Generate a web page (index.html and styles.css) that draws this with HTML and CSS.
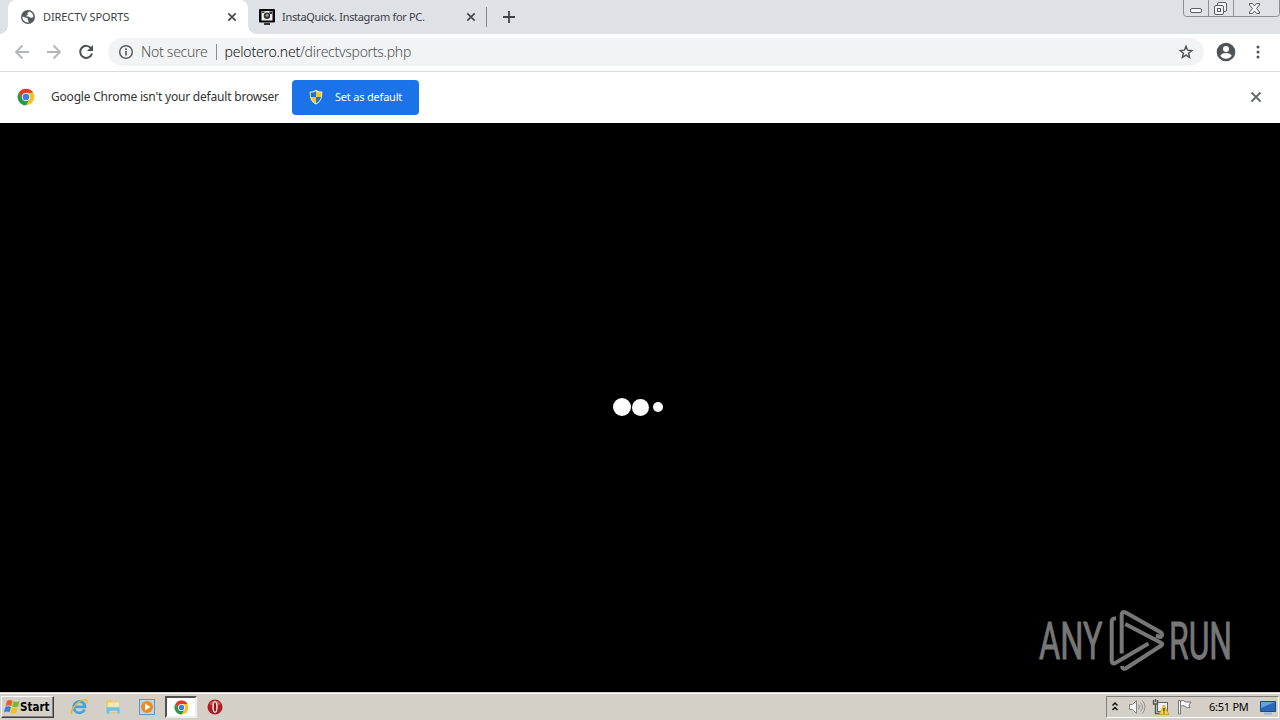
FILE: index.html
```html
<!DOCTYPE html>
<html lang="en">
<head>
<meta charset="utf-8">
<title>DIRECTV SPORTS</title>
<link rel="stylesheet" href="styles.css">
</head>
<body>
<div class="screen">
  <header class="tabstrip">
    <div class="tab active">
      <svg class="favicon" width="16" height="16" viewBox="0 0 16 16"><circle cx="8" cy="8" r="7" fill="#565a5e"/><path d="M2.400 7.600 5 8.600l2.500.5.4 2 1 2.400C5.500 14 2.200 11.500 2.400 7.600ZM9.400 2.500 7.200 4.200l.8 1.200L5.800 7.200l2.600.3 2.200 1.300 2.700-.6C13.600 5.500 12 3.400 9.400 2.500Z" fill="#fff"/></svg>
      <span class="label t1">DIRECTV SPORTS</span>
      <svg class="close" width="10" height="10" viewBox="0 0 10 10"><path d="m1.300 1.300 7.400 7.400m0-7.400L1.300 8.700" stroke="#45494d" stroke-width="1.700"/></svg>
    </div>
    <div class="tab second">
      <svg class="favicon" width="16" height="16" viewBox="0 0 16 16"><rect width="16" height="13.500" rx="1" fill="#080808"/><rect x="2.500" y="2" width="11" height="9.500" fill="#eee"/><path d="M3 2.500h3L5 4H3zM10 2.500h3V5h-2z" fill="#333"/><circle cx="8" cy="6.800" r="3.200" fill="#333"/><circle cx="8" cy="6.300" r="1.500" fill="#999"/><path d="M5 14.200h6v1.600H5z" fill="#080808"/></svg>
      <span class="label t2">InstaQuick. Instagram for PC.</span>
      <svg class="close" width="10" height="10" viewBox="0 0 10 10"><path d="m1.300 1.300 7.400 7.400m0-7.400L1.300 8.700" stroke="#45494d" stroke-width="1.700"/></svg>
    </div>
    <i class="tab-sep"></i>
    <svg class="newtab" width="12" height="12" viewBox="0 0 12 12"><path d="M6 0v12M0 6h12" stroke="#3f4347" stroke-width="1.800"/></svg>
    <div class="winbtns">
      <svg width="97" height="17" viewBox="0 0 97 17"><path d="M.5-1v14.500q0 3 3 3h90q3 0 3-3V-1M25.500 0v16M50.500 0v16" fill="none" stroke="#8a8e96"/><g fill="#f5f6f8" stroke="#595e68"><rect x="7.500" y="8.500" width="11" height="4" rx="1.500"/><rect x="34.500" y="2.500" width="9" height="9" rx="1.500"/><rect x="31.500" y="5.500" width="9" height="9" rx="1.500"/><rect x="34.500" y="8.500" width="3" height="3"/><path d="M66.500 3.500h3l2 2.500 2-2.500h3v1.500l-3 3.500 3 3.500v1.500h-3l-2-2.500-2 2.500h-3V12l3-3.500-3-3.500z"/></g></svg>
    </div>
  </header>
  <div class="toolbar">
    <svg class="nav" width="16" height="16" viewBox="0 0 16 16"><path d="M15 8H2m6.500-6.500L2 8l6.500 6.500" fill="none" stroke="#b3b5b8" stroke-width="1.800"/></svg>
    <svg class="nav" width="16" height="16" viewBox="0 0 16 16"><path d="M1 8h13M7.500 1.500 14 8l-6.500 6.500" fill="none" stroke="#b3b5b8" stroke-width="1.800"/></svg>
    <svg class="nav" width="16" height="16" viewBox="0 0 16 16"><path d="M13.200 4.500A6 6 0 1 0 14 9.500" fill="none" stroke="#4c5054" stroke-width="2"/><path d="M15 1v6H9z" fill="#4c5054"/></svg>
    <div class="omnibox">
      <svg class="info" width="16" height="16" viewBox="0 0 16 16"><circle cx="8" cy="8" r="6.300" fill="none" stroke="#5a5e62" stroke-width="1.500"/><path d="M8 7v4.500M8 4.200v1.700" stroke="#5a5e62" stroke-width="1.700"/></svg>
      <span class="label secure">Not secure</span>
      <i class="sep"></i>
      <span class="label host">pelotero.net</span><span class="label path">/directvsports.php</span>
      <svg class="star" width="16" height="16" viewBox="0 0 16 16"><path d="m8 2.200 1.600 4 4.200.3-3.200 2.700 1 4.200L8 11.100l-3.600 2.300 1-4.200-3.200-2.700 4.200-.3z" fill="none" stroke="#505458" stroke-width="1.400"/></svg>
    </div>
    <svg class="profile" width="20" height="20" viewBox="0 0 20 20"><circle cx="10" cy="10" r="9.300" fill="#505458"/><circle cx="10" cy="7" r="3" fill="#fff"/><path d="M4.300 13.800c1.100-2 3.200-2.700 5.700-2.700s4.600.7 5.700 2.700C14.400 15.700 12.400 16.700 10 16.700s-4.400-1-5.700-2.900Z" fill="#fff"/></svg>
    <svg class="dots" width="4" height="16" viewBox="0 0 4 16"><g fill="#505458"><circle cx="2" cy="3" r="1.500"/><circle cx="2" cy="8" r="1.500"/><circle cx="2" cy="13" r="1.500"/></g></svg>
  </div>
  <div class="infobar">
    <svg width="18" height="18" viewBox="0 0 18 18"><circle cx="9" cy="9" r="8.300" fill="#fbc116"/><path d="M1.800 4.850A8.300 8.300 0 0 1 16.200 4.850H9L5.500 11z" fill="#e33b2e"/><path d="M1.800 4.850 5.500 11 9 13l3.500-2L9 17.300A8.300 8.300 0 0 1 1.800 4.850Z" fill="#229a4b"/><circle cx="9" cy="9" r="4.100" fill="#fff"/><circle cx="9" cy="9" r="3.300" fill="#3f7fe8"/></svg>
    <span class="label notice">Google Chrome isn't your default browser</span>
    <div class="setdefault">
      <svg width="16" height="16" viewBox="0 0 16 16"><path d="M8 .7c2 1.400 4 1.900 6.300 1.700C14.500 8.600 13 12.900 8 15.500 3 12.900 1.500 8.600 1.700 2.400 4 2.600 6 2.100 8 .7Z" fill="#f0eccb"/><path d="M8 2.200V8H2.900c-.3-1.500-.3-2.800-.2-4.400C4.700 3.600 6.500 3.100 8 2.200ZM8 8h5c-.7 3-2.300 5-5 6.300Z" fill="#2673c6"/><path d="M8 2.200V8h5c.3-1.500.3-2.800.2-4.400C11.300 3.600 9.500 3.100 8 2.200ZM8 8H2.900C3.700 11 5.300 13 8 14.300Z" fill="#f7c52d"/></svg>
      <span class="label setlabel">Set as default</span>
    </div>
    <svg class="dismiss" width="12" height="12" viewBox="0 0 12 12"><path d="m1.500 1.500 9 9m0-9-9 9" stroke="#666a6e" stroke-width="1.900"/></svg>
  </div>
  <main class="page">
    <div class="loader"><i class="big"></i><i class="mid"></i><i class="small"></i></div>
    <svg class="watermark" width="200" height="70" viewBox="0 0 200 70">
      <g fill="#777" stroke="#777" stroke-width=".9" font-family="Roboto, sans-serif" font-size="52"><text transform="translate(2 52.300) scale(.63 1)" textLength="101" lengthAdjust="spacingAndGlyphs">ANY</text><text transform="translate(132 52.300) scale(.63 1)" textLength="100" lengthAdjust="spacingAndGlyphs">RUN</text></g>
      <g fill="none" stroke="#777" stroke-width="4" stroke-linejoin="round" stroke-linecap="butt"><path d="M84.700 46.500V8q0-4.500 4-2.500L124 25.500q2.500 2.500-.5 4.500l-4.500-1.500"/><path d="M88.200 17 124 35.800q2.500 1.400 0 2.900L89 61.300q-3.500 1.500-4-2.300"/><path d="M79 11.500q-4.300-.5-4.300 3.500v38.500q0 4.500 4 2.200L111.500 36.500"/></g>
    </svg>
  </main>
  <footer class="taskbar">
    <div class="start">
      <svg width="17" height="16" viewBox="0 0 17 16"><path d="M3 2q3-2 5.500-.2L7.200 7Q4.500 5.400 1.600 7z" fill="#e95b27"/><path d="M9.500 2.300q3 1.500 6-.1L14 7.600q-3 1.500-5.800 0z" fill="#78b82f"/><path d="M1.300 8q3-1.600 5.600 0l-1.400 5.200Q3 11.700 0 13.200z" fill="#3480cf"/><path d="M7.900 8.500q3 1.500 5.800 0L12.300 14q-3 1.500-5.800 0z" fill="#f7bd25"/></svg>
      <b class="label startlabel">Start</b>
    </div>
    <div class="launch">
      <svg width="18" height="18" viewBox="0 0 18 18"><path d="M14.500 11.500A5.700 5.700 0 1 1 15 8.800H5" fill="none" stroke="#43a4de" stroke-width="2.700"/><path d="M2 16C-1 13 10-.5 16.500 2q1.300 1 .2 3" fill="none" stroke="#e7b82f" stroke-width="1.300"/></svg>
      <svg width="18" height="18" viewBox="0 0 18 18"><path d="M2 2h5l1 1.500h6v12H2z" fill="#e9ca68"/><path d="M4 4.500h11v9H4z" fill="#f8e9a8"/><path d="M2 9h14v7h-3v-3H6v3H2z" fill="#79bddd" stroke="#b9deea" stroke-width=".7"/></svg>
      <svg width="18" height="18" viewBox="0 0 18 18"><rect x="1.500" y="1.500" width="15" height="15" fill="#b9d8ee" stroke="#5299cf"/><circle cx="9" cy="9" r="6" fill="#f18a1c"/><path d="m7 5.500 5.500 3.500L7 12.500z" fill="#fff"/></svg>
      <div class="running"><svg width="15" height="15" viewBox="0 0 18 18"><circle cx="9" cy="9" r="8.300" fill="#fbc116"/><path d="M1.800 4.850A8.300 8.300 0 0 1 16.200 4.850H9L5.500 11z" fill="#dc3b2e"/><path d="M1.800 4.850 5.500 11 9 13l3.500-2L9 17.300A8.300 8.300 0 0 1 1.800 4.850Z" fill="#229a4b"/><circle cx="9" cy="9" r="4.300" fill="#fff"/><circle cx="9" cy="9" r="3.300" fill="#3f7fe8"/></svg></div>
      <svg width="18" height="18" viewBox="0 0 18 18"><circle cx="9" cy="9" r="7.500" fill="#b31b20"/><path d="M3 6q6-7 12 0L9 8z" fill="#d6585b"/><ellipse cx="9" cy="9" rx="2.700" ry="6" fill="#eee"/><ellipse cx="9" cy="9" rx="1.200" ry="4.800" fill="#991116"/></svg>
    </div>
    <div class="tray">
      <svg width="8" height="12" viewBox="0 0 8 12"><path d="m1.500 4.500 2.500-2.500 2.500 2.500m-5 4.500L4 6.500 6.500 9" fill="none" stroke="#111" stroke-width="1.500"/></svg>
      <svg class="sound" width="18" height="16" viewBox="0 0 18 16"><path d="M1.500 5.500h3l4-4v13l-4-4h-3z" fill="#f8f8f8" stroke="#858585"/><path d="M10.500 5.500q2 2.500 0 5m2-7q4 4.500 0 9m2-11q5 6.500 0 13" fill="none" stroke="#929292"/></svg>
      <svg class="net" width="18" height="16" viewBox="0 0 18 16"><rect x="5.500" y="3.500" width="10" height="9" fill="#eee" stroke="#666"/><path d="M1.500 1v4h4V1M3.500 0v3M3.500 5v9.500h5" fill="none" stroke="#555" stroke-width="1.400"/><path d="m12 6 5 9.500H7z" fill="#f8d529" stroke="#bb9415" stroke-width=".7"/><path d="M12 9v3.500m0 1v1" stroke="#222" stroke-width="1.200"/></svg>
      <svg class="flag" width="17" height="16" viewBox="0 0 17 16"><path d="M2.500 15V1.500h2V15z" fill="#fff" stroke="#777"/><path d="M4.500 2q3-1.500 5 1h5.500l-2 3 1 2.500q-3 1-5-1t-4.500 0z" fill="#f8f8f8" stroke="#777"/></svg>
      <span class="label clock">6:51 PM</span>
      <svg class="desktop" width="16" height="15" viewBox="0 0 16 15"><path d="M.5 1.500h15v10H.500z" fill="#2868b7" stroke="#174887"/><path d="M1 2h14L1 8z" fill="#65a3df"/><path d="M4 13.500h8" stroke="#8bb6df" stroke-width="2"/></svg>
    </div>
  </footer>
</div>
</body>
</html>
```
FILE: styles.css
```css
* { box-sizing: border-box; }
body { margin: 0; overflow: hidden; background: #000; }
svg { display: block; flex: none; }
.screen { width: 1280px; height: 720px; display: flex; flex-direction: column; font: 11px/16px "Noto Sans", sans-serif; color: #3c4043; }
.label { white-space: nowrap; flex: none; }
.tabstrip { height: 34px; background: #dee1e6; display: flex; align-items: center; padding-left: 8px; flex: none; }
.tab { height: 34px; display: flex; align-items: center; }
.tab.active { width: 240px; background: #fff; padding: 0 11px 0 12px; border-radius: 8px 8px 0 0; position: relative; }
.tab.active::before, .tab.active::after { content: ""; position: absolute; bottom: 0; width: 8px; height: 8px; background: radial-gradient(circle at 0 0, #dee1e6 7.5px, #fff 8px); }
.tab.active::before { left: -8px; }
.tab.active::after { right: -8px; background: radial-gradient(circle at 100% 0, #dee1e6 7.5px, #fff 8px); }
.tab .label { margin-left: 7px; }
.tab .close { margin-left: auto; }
.t1 { letter-spacing: -.1px; }
.t2 { letter-spacing: -.32px; color: #3c4043; }
.tab.second { width: 238px; padding: 0 10px 0 11px; }
.tab-sep { width: 1px; height: 20px; background: #858a90; }
.newtab { margin-left: 16px; }
.winbtns { margin-left: auto; align-self: flex-start; }
.toolbar { height: 38px; background: #fff; border-bottom: 1px solid #dadcde; display: flex; align-items: center; padding: 0 0 1px 14px; flex: none; }
.toolbar .nav { margin-right: 16px; }
.toolbar .nav:nth-child(3) { margin-right: 14px; }
.omnibox { width: 1096px; height: 28px; border-radius: 14px; background: #f1f3f4; display: flex; align-items: center; padding: 0 10px; font-size: 14px; }
.secure { margin-left: 7px; color: #505458; font-weight: 300; letter-spacing: -.26px; }
.sep { width: 1px; height: 16px; background: #8b8f93; margin: 0 8px; }
.host { color: #111214; font-weight: 300; letter-spacing: -.2px; }
.path { color: #505458; font-weight: 300; letter-spacing: -.28px; }
.star { margin-left: auto; }
.profile { margin-left: 12px; }
.dots { margin-left: 20px; }
.infobar { height: 51px; background: #fff; display: flex; align-items: center; padding: 0 18px 1px 17px; flex: none; }
.notice { margin-left: 16px; width: 228px; font-size: 12px; color: #333; letter-spacing: -.2px; }
.setdefault { margin-left: 13px; width: 127px; height: 35px; border-radius: 4px; background: #1a73e8; color: #fff; display: flex; align-items: center; padding-left: 16px; }
.setlabel { margin-left: 11px; letter-spacing: -.2px; }
.dismiss { margin-left: auto; }
.page { height: 569px; background: #000; position: relative; flex: none; display: flex; justify-content: center; align-items: center; }
.loader { display: flex; align-items: center; padding: 0 4px 1px 0; }
.loader i { border-radius: 50%; background: #fff; }
.big { width: 18px; height: 18px; }
.mid { width: 17px; height: 17px; margin-left: 1px; }
.small { width: 10px; height: 10px; margin-left: 4px; }
.watermark { position: absolute; right: 43px; bottom: 15px; }
.taskbar { height: 28px; background: #d4d0c8; display: flex; align-items: center; padding: 2px 1px 0; box-shadow: inset 0 1px #d4d0c8, inset 0 2px #fff; flex: none; }
.start { width: 53px; height: 22px; display: flex; align-items: center; padding-left: 2px; border: 1px solid; border-color: #fff #404040 #404040 #fff; box-shadow: inset -1px -1px #808080; color: #000; font-family: "DejaVu Sans", sans-serif; font-stretch: condensed; }
.startlabel { margin-left: -1px; font-size: 11.5px; }
.launch { display: flex; align-items: center; margin-left: 16px; gap: 16px; }
.running { width: 32px; height: 22px; background: #fff; border: 2px solid; border-color: #505050 #eee #eee #505050; display: flex; justify-content: center; align-items: center; margin: 0 -7px; }
.tray { margin-left: auto; height: 22px; width: 173px; border: 1px solid; border-color: #808080 #fff #fff #808080; display: flex; align-items: center; padding-left: 4px; color: #000; }
.sound { margin-left: 9px; }
.net { margin-left: 6px; }
.flag { margin-left: 6px; }
.clock { margin-left: 16px; letter-spacing: -.25px; }
.desktop { margin-left: auto; margin-right: 2px; }
```
